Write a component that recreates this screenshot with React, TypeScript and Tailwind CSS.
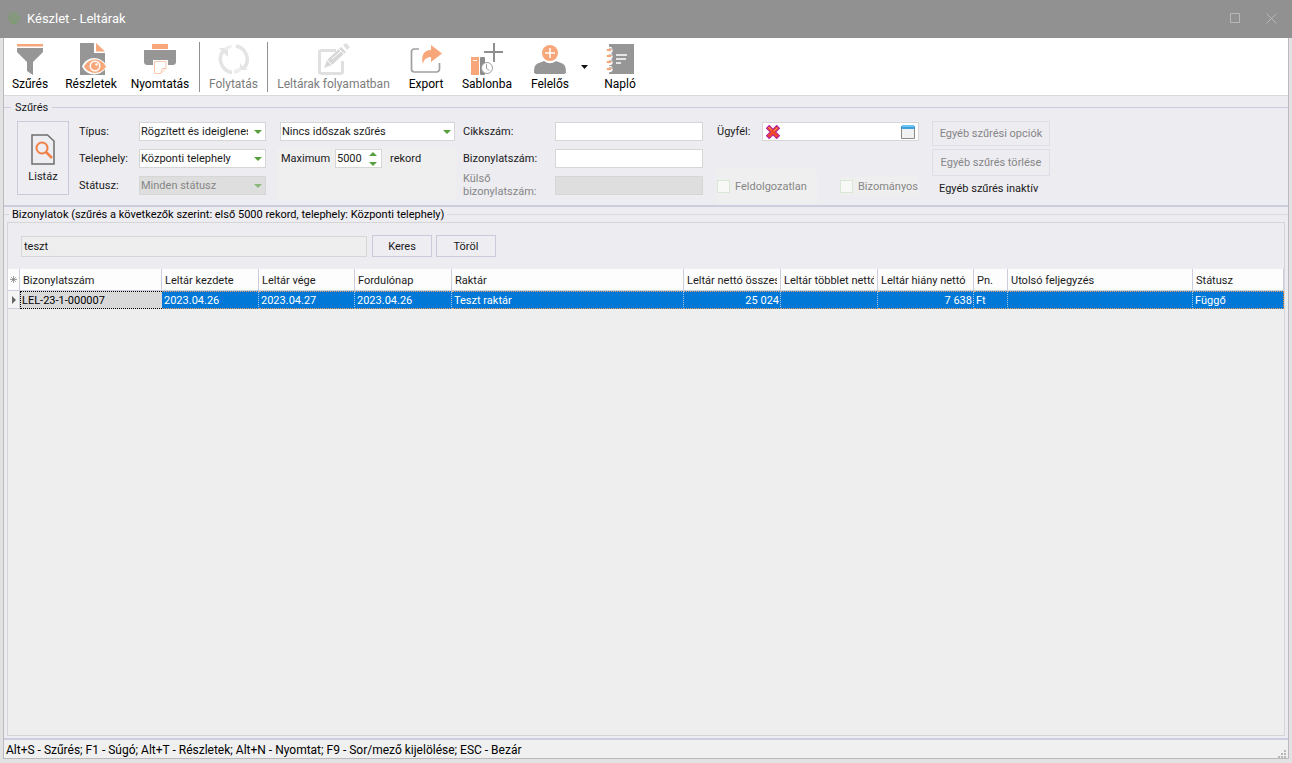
import type { ReactNode } from "react";
import clsx from "clsx";

// ─── Toolbar icons ────────────────────────────────────────────────────────────

const FilterIcon = () => (
  <svg width="32" height="32" viewBox="0 0 32 32">
    <path fill="#f7a77a" d="M3 1h26v2.500H3z" />
    <path fill="#969696" d="M3 5h26v4L19 19v13l-6-4v-9L3 9z" />
  </svg>
);

const DetailsIcon = () => (
  <svg width="32" height="32" viewBox="0 0 32 32">
    <path fill="#969696" d="M5 0h14v10h11v22H5z" />
    <path fill="#f7a77a" d="M21 0l9 8.500h-9z" />
    <path fill="#fff" d="M7 23.500C12 12 26 12 32 23.500 26 34 12 34 7 23.500z" />
    <path fill="#f7a77a" d="M9 23.500C14 14 26 14 31 23.500 26 32 14 32 9 23.500z" />
    <circle cx="20" cy="23" r="5.500" fill="#fff" />
    <circle cx="20" cy="23" r="4" fill="#f7a77a" />
    <circle cx="21.500" cy="21.500" r="1.200" fill="#fff" />
  </svg>
);

const PrintIcon = () => (
  <svg width="32" height="32" viewBox="0 0 32 32">
    <path fill="#f7a77a" d="M8 1h16v5H8z" />
    <path fill="#969696" d="M0 7h32v11c0 3-1 4-4 4H4c-3 0-4-1-4-4z" />
    <path fill="#fff" d="M9 17h15v9l-5 6H9z" />
    <path fill="#fff" stroke="#fbc9ad" d="M10.500 18.500h11.500v7l-5 5h-6.500z" />
    <path fill="none" stroke="#fbc9ad" d="M17 30l1-4.500h4" />
  </svg>
);

const ContinueIcon = () => (
  <svg width="32" height="32" viewBox="0 0 32 32">
    <g fill="none" stroke="#e4e4e4" strokeWidth="3.500">
      <path d="M14 29.500A13.500 13.500 0 0 1 6 7" />
      <path d="M18 3a13.500 13.500 0 0 1 8 22" />
    </g>
    <path fill="#e4e4e4" d="M1 5h9v9l-3-3zM22 20l2 3 6 4h-8z" />
    <path fill="#ededed" d="M6 5a14 14 0 0 1 8-3l-1 3a10 10 0 0 0-5 3zM16 31a14 14 0 0 0 8-4l-2-3a10 10 0 0 1-6 3z" />
  </svg>
);

const EditIcon = () => (
  <svg width="32" height="32" viewBox="0 0 32 32">
    <path fill="none" stroke="#e0e0e0" strokeWidth="3" d="M18 7.500H3.500A2 2 0 0 0 1.500 9.500v19a2 2 0 0 0 2 2h19a2 2 0 0 0 2-2V18" />
    <path fill="#d8d8d8" d="M6 25l3-8L23 4l5 5-14 13z" />
    <path fill="#e0e0e0" d="M25 2l3-2 4 4-3 3z" />
    <path stroke="#fff" fill="none" d="M9 17l5 5M21 6l5 5M14 16l9-8" />
  </svg>
);

const ExportIcon = () => (
  <svg width="32" height="32" viewBox="0 0 32 32">
    <path fill="none" stroke="#a0a0a0" strokeWidth="1.700" d="M9 6H4A2.500 2.500 0 0 0 1.500 8.500V26A3 3 0 0 0 4.500 29h22a3 3 0 0 0 3-3v-6" />
    <path fill="#f7a77a" d="M21 2l11 8.500L21 19v-5c-4 0-7 2-8 7-2.500-8 1-14 8-14z" />
  </svg>
);

const TemplateIcon = () => (
  <svg width="32" height="32" viewBox="0 0 32 32">
    <path fill="#f7a77a" d="M0 14h8v18H0z" />
    <path stroke="#fff" d="M2 17.500h4" />
    <rect x="9" y="14" width="5" height="18" rx="1" fill="#8c8c8c" />
    <circle cx="16" cy="25" r="5.500" fill="#fff" stroke="#a0a0a0" />
    <path fill="none" stroke="#a0a0a0" d="M15.500 21v4.500l3 2" />
    <path stroke="#8f8f8f" strokeWidth="2" d="M13 9h19M23 0v19" />
  </svg>
);

const OwnerIcon = () => (
  <svg width="32" height="32" viewBox="0 0 32 32">
    <circle cx="16" cy="10" r="8" fill="#f7a77a" />
    <path stroke="#fff" strokeWidth="1.500" d="M16 5v10M11 10h10" />
    <path fill="#969696" d="M0 30c0-6 1-9 5-10l5-2c4 3 8 3 12 0l5 2c4 1 5 4 5 10l-2 1H2z" />
  </svg>
);

const LogIcon = () => (
  <svg width="32" height="32" viewBox="0 0 32 32">
    <path fill="#969696" d="M5 1h25v30H5z" />
    {[7, 13, 19, 26].map((y) => (
      <g key={y}>
        <circle cx="5.500" cy={y} r="3.200" fill="#fff" />
        <path stroke="#969696" strokeWidth="1" d={`M5 ${y - 1}h4`} />
        <ellipse cx="5" cy={y} rx="2.500" ry="1.300" fill="#f7a77a" />
      </g>
    ))}
    <path stroke="#fff" strokeWidth="1.500" d="M12 12h11M12 16h10M12 20h5" />
  </svg>
);

// ─── Small glyphs ─────────────────────────────────────────────────────────────

const AppLogo = () => (
  <svg width="14" height="14" viewBox="0 0 14 14" fill="none" stroke="#74a362" strokeWidth="1">
    <circle cx="7" cy="7" r="5.500" strokeDasharray="3 1.500" />
    <path d="M7 13V6M7 8L3 4.500M7 8l4-3.500M4 10l3 1 3-1M5 2l2 3 2-3M2 7l3 1M12 7L9 8" />
  </svg>
);

const ListIcon = () => (
  <svg width="24" height="32" viewBox="0 0 24 32" fill="none">
    <path stroke="#6e6e6e" strokeWidth="1.500" d="M1 1h15.500l6.500 6V30H1z" />
    <circle cx="11" cy="14" r="5.500" stroke="#f08046" strokeWidth="2" />
    <path stroke="#f08046" strokeWidth="2.500" d="M15 18l6 6" />
  </svg>
);

const ClearIcon = () => (
  <svg width="14" height="14" viewBox="0 0 14 14" className="block">
    <path fill="none" stroke="#b8209c" strokeWidth="5" d="M1.500 1.500l11 11M12.500 1.500l-11 11" />
    <path fill="none" stroke="#ee4a2a" strokeWidth="3" d="M2.500 2.500l9 9M11.500 2.500l-9 9" />
    <path fill="none" stroke="#ffa070" strokeWidth="1" d="M2.500 2l3 3M8 6l3.500-3.500" />
  </svg>
);

const WindowIcon = () => (
  <svg width="14" height="14" viewBox="0 0 14 14" className="block">
    <path fill="#f1f1f1" stroke="#8a8a8a" d="M.5 2.500h13v11H.5z" />
    <path fill="#3f9fd8" d="M0 1h14v3H0z" />
    <path fill="#6cc4f2" d="M1 0h12v2H1z" />
  </svg>
);

// ─── Form pieces ──────────────────────────────────────────────────────────────

interface PickerProps {
  id: string;
  value: string;
  disabled?: boolean;
  className?: string;
}

function Picker({ id, value, disabled, className }: PickerProps) {
  return (
    <div className={clsx("relative h-[19px]", className)}>
      <select
        id={id}
        disabled={disabled}
        className={clsx(
          "block h-full w-full appearance-none overflow-hidden border border-[#d6d6d6] pr-[17px] pl-px leading-4",
          disabled ? "bg-[#dedede] text-[#868686] opacity-100" : "bg-white",
        )}
      >
        <option>{value}</option>
      </select>
      <svg
        width="8"
        height="4"
        viewBox="0 0 8 4"
        className={clsx("pointer-events-none absolute top-2 right-1", disabled && "opacity-60")}
      >
        <path fill="#55a03c" d="M0 0h8L4 4z" />
      </svg>
    </div>
  );
}

function TextField({ id, disabled }: { id: string; disabled?: boolean }) {
  return (
    <input
      id={id}
      type="text"
      disabled={disabled}
      className={clsx("h-[19px] w-[148px] border border-[#d6d6d6] px-1", disabled ? "bg-[#dedede]" : "bg-white")}
    />
  );
}

interface ToolButtonProps {
  label: string;
  icon: ReactNode;
  className: string;
  disabled?: boolean;
}

function ToolButton({ label, icon, className, disabled }: ToolButtonProps) {
  return (
    <button
      type="button"
      disabled={disabled}
      className={clsx(
        "flex shrink-0 flex-col items-center pt-[5px] whitespace-nowrap",
        disabled ? "text-[#7c7c7c]" : "text-black",
        className,
      )}
    >
      {icon}
      <span className="leading-[18px]">{label}</span>
    </button>
  );
}

function Check({ id, label }: { id: string; label: string }) {
  return (
    <div className="flex items-center gap-[5px] text-[#868686]">
      <input id={id} type="checkbox" disabled className="size-[13px] appearance-none border border-[#d8e6d4] bg-[#f8f9f7]" />
      <label htmlFor={id}>{label}</label>
    </div>
  );
}

// ─── Inventory table ──────────────────────────────────────────────────────────

interface Column {
  title: string;
  width: string;
  value: string;
  right?: boolean;
}

const columns: Column[] = [
  { title: "Bizonylatszám", width: "w-[142px]", value: "LEL-23-1-000007" },
  { title: "Leltár kezdete", width: "w-[97px]", value: "2023.04.26" },
  { title: "Leltár vége", width: "w-[96px]", value: "2023.04.27" },
  { title: "Fordulónap", width: "w-[97px]", value: "2023.04.26" },
  { title: "Raktár", width: "", value: "Teszt raktár" },
  { title: "Leltár nettó összes", width: "w-[97px]", value: "25 024", right: true },
  { title: "Leltár többlet nettó", width: "w-[97px]", value: "" },
  { title: "Leltár hiány nettó", width: "w-[96px]", value: "7 638", right: true },
  { title: "Pn.", width: "w-[34px]", value: "Ft" },
  { title: "Utolsó feljegyzés", width: "w-[185px]", value: "" },
  { title: "Státusz", width: "w-[91px]", value: "Függő" },
];

function InventoryTable() {
  return (
    <table className="w-full table-fixed border-separate border-spacing-0 text-left">
      <colgroup>
        <col className="w-3" />
        {columns.map((c) => (
          <col key={c.title} className={c.width} />
        ))}
      </colgroup>
      <thead>
        <tr className="h-[22px] bg-[#fdfdfd]">
          <th className="border-r border-b border-[#cccddd] p-0">
            <svg width="7" height="7" viewBox="0 0 9 9" stroke="#777" className="mx-auto">
              <path d="M4.500 0v9M0 4.500h9M1.500 1.500l6 6M7.500 1.500l-6 6" strokeWidth=".9" />
            </svg>
          </th>
          {columns.map((c) => (
            <th key={c.title} className="border-r border-b border-[#cccddd] pt-px pr-[3px] pb-0 pl-[3px] font-normal">
              <div className="overflow-hidden whitespace-nowrap">{c.title}</div>
            </th>
          ))}
        </tr>
      </thead>
      <tbody>
        <tr className="h-[18px] bg-[#0078d7] text-white">
          <td className="border-r border-b border-[#cccddd] bg-[#f4f4f4] p-0">
            <svg width="4" height="8" viewBox="0 0 4 8" className="mx-auto">
              <path fill="#666" d="M0 0l4 4-4 4z" />
            </svg>
          </td>
          {columns.map((c, i) => (
            <td
              key={c.title}
              className={clsx(
                "border-y border-dotted pt-px pr-px pb-0 leading-[15px] whitespace-nowrap",
                c.right && "text-right",
                i === 0 && "border-l border-black bg-[#d9d9d9] pl-px text-black",
                i > 0 && "border-y-[#f0a060] pl-[2px]",
                i > 0 && i < columns.length - 1 && "border-r border-r-[#a8c8e8]",
                i === columns.length - 1 && "border-r border-r-[#ff8728]",
              )}
            >
              {c.value}
            </td>
          ))}
        </tr>
      </tbody>
    </table>
  );
}

// ─── Window ───────────────────────────────────────────────────────────────────

const pushButton = "border border-[#c9cadb] bg-[#eeedf2]";

export default function App() {
  return (
    <div className="flex min-h-screen flex-col bg-[#e2e2e2] font-[Roboto,sans-serif] text-[11px] leading-[13px] text-[#1a1a1a]">
      <header className="flex h-[38px] shrink-0 items-center bg-[#919191] pr-[3px] pb-[2px] pl-[7px] text-[13px] text-white">
        <AppLogo />
        <h1 className="ml-[6px] flex-1">Készlet - Leltárak</h1>
        <button type="button" aria-label="Teljes méret" className="flex w-9 justify-center">
          <svg width="10" height="10" viewBox="0 0 10 10">
            <path fill="none" stroke="#b8b8b8" d="M.5.500h9v9h-9z" />
          </svg>
        </button>
        <button type="button" aria-label="Bezárás" className="flex w-9 justify-center">
          <svg width="11" height="11" viewBox="0 0 11 11">
            <path stroke="#b8b8b8" d="M.5.500l10 10M10.500.500l-10 10" />
          </svg>
        </button>
      </header>

      <div className="mx-[3px] mb-1 flex flex-1 flex-col border-x border-b border-[#b9b9bf] bg-[#edecf1]">
        <nav className="flex h-[58px] shrink-0 border-b border-[#dadade] bg-white text-xs">
          <ToolButton label="Szűrés" icon={<FilterIcon />} className="w-[52px]" />
          <ToolButton label="Részletek" icon={<DetailsIcon />} className="w-[70px]" />
          <ToolButton label="Nyomtatás" icon={<PrintIcon />} className="w-[68px]" />
          <div className="mt-1 ml-[5px] h-[50px] w-px bg-[#919191]" />
          <ToolButton label="Folytatás" icon={<ContinueIcon />} className="w-[67px]" disabled />
          <div className="mt-1 h-[50px] w-px bg-[#919191]" />
          <ToolButton label="Leltárak folyamatban" icon={<EditIcon />} className="w-[131px]" disabled />
          <ToolButton label="Export" icon={<ExportIcon />} className="w-[54px]" />
          <ToolButton label="Sablonba" icon={<TemplateIcon />} className="w-[68px]" />
          <ToolButton label="Felelős" icon={<OwnerIcon />} className="w-[58px]" />
          <button type="button" aria-label="Felelős menü" className="flex w-[10px] items-center justify-center">
            <svg width="7" height="4" viewBox="0 0 7 4">
              <path fill="#111" d="M0 0h7L3.500 4z" />
            </svg>
          </button>
          <ToolButton label="Napló" icon={<LogIcon />} className="w-[62px]" />
        </nav>

        {/* Filter panel */}
        <section aria-label="Szűrés" className="flex h-[111px] shrink-0 flex-col border-b-2 border-[#cccddd]">
          <div className="flex h-[22px] items-center gap-1">
            <span className="h-px w-[7px] bg-[#cccddd]" />
            <h2>Szűrés</h2>
            <span className="h-px flex-1 bg-[#cccddd]" />
          </div>
          <div className="flex items-start pt-[3px] pl-[13px]">
            <button type="button" className={clsx(pushButton, "flex h-[74px] w-[52px] flex-col items-center pt-3")}>
              <ListIcon />
              <span className="mt-1">Listáz</span>
            </button>

            <div className="ml-[10px] grid grid-cols-[60px_127px] items-center gap-y-2 pt-px">
              <label htmlFor="type">Típus:</label>
              <Picker id="type" value="Rögzített és ideiglenes" />
              <label htmlFor="site">Telephely:</label>
              <Picker id="site" value="Központi telephely" />
              <label htmlFor="status">Státusz:</label>
              <Picker id="status" value="Minden státusz" disabled />
            </div>

            <div className="ml-[11px] pt-px">
              <Picker id="period" value="Nincs időszak szűrés" className="ml-[3px] w-[175px]" />
              <div className="mt-[7px] h-[52px] w-[179px] bg-[#efefef] pt-px pl-1">
                <div className="flex items-center">
                  <label htmlFor="max" className="w-[54px]">Maximum</label>
                  <div className="flex h-[19px] w-[47px] items-center justify-between border border-[#d6d6d6] bg-white pr-1 pl-px">
                    <input id="max" type="text" defaultValue="5000" className="w-7 bg-transparent" />
                    <svg width="8" height="14" viewBox="0 0 8 14">
                      <path fill="#55a03c" d="M0 4h8L4 0zM0 10h8l-4 4z" />
                    </svg>
                  </div>
                  <span className="ml-2">rekord</span>
                </div>
              </div>
            </div>

            <div className="ml-[7px] grid grid-cols-[92px_148px] items-center gap-y-2 pt-px">
              <label htmlFor="sku">Cikkszám:</label>
              <TextField id="sku" />
              <label htmlFor="doc">Bizonylatszám:</label>
              <TextField id="doc" />
              <label htmlFor="ext" className="h-[19px] text-[#868686]">
                <span className="-mt-1 block">Külső bizonylatszám:</span>
              </label>
              <TextField id="ext" disabled />
            </div>

            <div className="ml-[14px] pt-px">
              <div className="flex items-center">
                <label htmlFor="client" className="w-[45px]">Ügyfél:</label>
                <div className="flex h-[19px] w-[157px] items-center border border-[#d6d6d6] bg-white px-[3px]">
                  <button type="button" aria-label="Ügyfél törlése"><ClearIcon /></button>
                  <input id="client" type="text" className="min-w-0 flex-1" />
                  <button type="button" aria-label="Ügyfél választása"><WindowIcon /></button>
                </div>
              </div>
              <div className="mt-7 flex items-center">
                <div className="flex h-[34px] w-[100px] items-center bg-[#efefef]">
                  <Check id="open" label="Feldolgozatlan" />
                </div>
                <div className="ml-[23px] flex h-[18px] items-center bg-[#efefef]">
                  <Check id="consign" label="Bizományos" />
                </div>
              </div>
            </div>

            {/* fixed gap keeps the side buttons clear of the partner field */}
            <div className="ml-[13px] flex w-[118px] flex-col">
              <button type="button" disabled className="h-[25px] border border-[#dedee8] text-[#868686]">Egyéb szűrési opciók</button>
              <button type="button" disabled className="mt-[3px] h-[27px] border border-[#dedee8] text-[#868686]">Egyéb szűrés törlése</button>
              <output className="mt-[6px] pl-[7px] whitespace-nowrap">Egyéb szűrés inaktív</output>
            </div>
          </div>
        </section>

        {/* Documents panel */}
        <section aria-label="Bizonylatok" className="flex flex-1 flex-col border-b-2 border-[#cccddd] pb-[2px]">
          <div className="flex h-[15px] items-center gap-[3px]">
            <span className="h-px w-[5px] bg-[#d9d9df]" />
            <h2 className="whitespace-nowrap text-black">
              Bizonylatok (szűrés a következők szerint: első 5000 rekord, telephely: Központi telephely)
            </h2>
            <span className="h-px flex-1 bg-[#d9d9df]" />
          </div>
          <div className="mx-[3px] flex flex-1 flex-col border border-[#d6d6d9] bg-[#eeeeee]">
            <div className="flex h-[46px] items-center gap-1 bg-[#edecf1] pl-[13px]">
              <input
                type="text"
                aria-label="Keresés"
                defaultValue="teszt"
                className="mr-px h-[21px] w-[346px] border border-[#d6d6d6] bg-[#eeeeee] px-[2px]"
              />
              <button type="button" className={clsx(pushButton, "h-[22px] w-[60px]")}>Keres</button>
              <button type="button" className={clsx(pushButton, "h-[22px] w-[60px]")}>Töröl</button>
            </div>
            <InventoryTable />
          </div>
        </section>

        <footer className="flex h-[18px] shrink-0 items-center justify-between bg-[#f0f0f0] px-[2px] text-xs text-black">
          <span className="pt-px whitespace-nowrap">Alt+S - Szűrés; F1 - Súgó; Alt+T - Részletek; Alt+N - Nyomtat; F9 - Sor/mező kijelölése; ESC - Bezár</span>
          <svg width="8" height="8" viewBox="0 0 8 8" fill="#b8b8b8" className="self-end">
            <path d="M6 0h2v2H6zM3 3h2v2H3zM6 3h2v2H6zM0 6h2v2H0zM3 6h2v2H3zM6 6h2v2H6z" />
          </svg>
        </footer>
      </div>
    </div>
  );
}
